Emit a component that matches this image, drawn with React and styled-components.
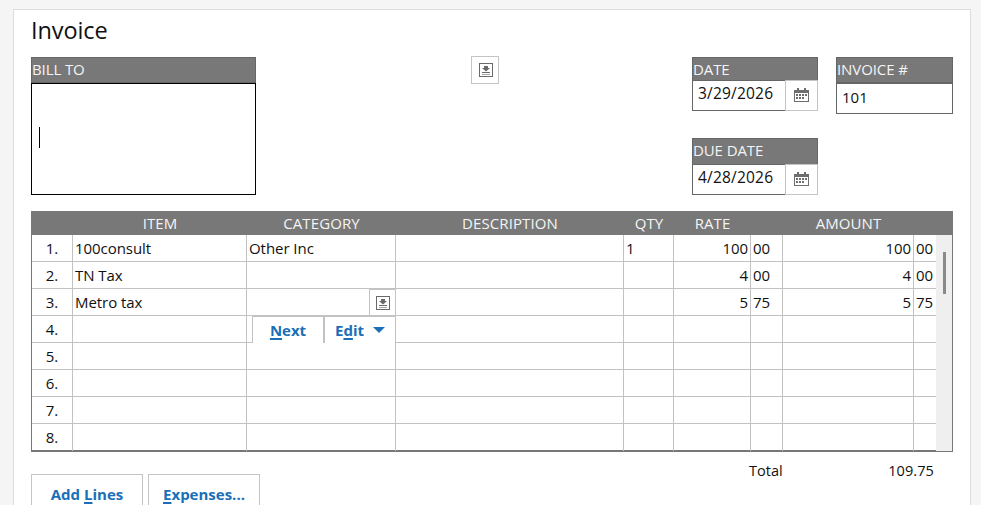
import React from "react";
import styled, { createGlobalStyle } from "styled-components";

const Global = createGlobalStyle`
  html, body { margin: 0; padding: 0; height: 505px; overflow: hidden; background: #f5f5f5; }
  body { font-family: "Open Sans", "Noto Sans", "Liberation Sans", sans-serif; color: #111; }
`;
const FONT_STACK = `"Open Sans", "Noto Sans", "Liberation Sans", sans-serif`;

const Panel = styled.main`
  box-sizing: border-box;
  margin: 9px 0 0 13px;
  width: 958px;
  height: 496px;
  overflow: hidden;
  background: #fff;
  border: 1px solid #dcdcdc;
  border-bottom: 0;
  padding: 0 17px;
`;
const Title = styled.h1`
  margin: 0;
  height: 47px;
  font: 400 23.5px/40px ${FONT_STACK};
  letter-spacing: -0.1px;
  color: #111;
`;
const TopRow = styled.section`
  display: flex;
  align-items: flex-start;
  height: 154px;
`;
const BillTo = styled.div`
  width: 225px;
  margin-right: 215px;
`;
const Label = styled.div`
  box-sizing: border-box;
  height: ${p => p.$h || 26}px;
  background: #787878;
  border: 1px solid #666;
  border-bottom-width: 2px;
  color: #f4f4f4;
  font: 400 15px/23px ${FONT_STACK};
  letter-spacing: -0.1px;
  white-space: nowrap;
`;
const AddressBox = styled.div`
  box-sizing: border-box;
  height: 112px;
  border: 1px solid #000;
  display: flex;
  align-items: center;
  padding: 0 7px 4px;
  margin-top: -1px;
`;
const Caret = styled.span`
  display: block;
  width: 1px;
  height: 21px;
  background: #000;
`;
const IconBtnBox = styled.button`
  box-sizing: border-box;
  padding: 0;
  width: 28px;
  height: 28px;
  background: #fff;
  border: 1px solid #c4c4c4;
  display: flex;
  align-items: center;
  justify-content: center;
`;
const PickBtn = styled(IconBtnBox)`
  margin-top: -1px;
  margin-right: 193px;
  padding-left: 2px;
`;
const DateColumn = styled.div`
  width: 126px;
  margin-right: 18px;
  display: flex;
  flex-direction: column;
  gap: 27px;
`;
const DateField = styled.div`
  display: flex;
  flex-direction: column;
`;
const DateInputRow = styled.div`
  display: flex;
  height: 31px;
  margin-top: -2px;
`;
const DateValue = styled.div`
  box-sizing: border-box;
  width: 93px;
  border: 1px solid #666;
  border-right: 0;
  font: 400 15.5px/25px ${FONT_STACK};
  letter-spacing: 0.2px;
  padding-left: 5px;
  background: #fff;
  white-space: nowrap;
`;
const CalBtn = styled.div`
  box-sizing: border-box;
  width: 33px;
  border: 1px solid #c4c4c4;
  padding-bottom: 2px;
  display: flex;
  align-items: center;
  justify-content: center;
  background: #fff;
`;
const InvoiceField = styled.div`
  width: 117px;
`;
const InvoiceValue = styled.div`
  box-sizing: border-box;
  height: 31px;
  margin-top: -1px;
  border: 1px solid #666;
  font: 400 15px/26px ${FONT_STACK};
  padding-left: 5px;
`;
const Table = styled.section`
  box-sizing: border-box;
  position: relative;
  width: 922px;
  height: 241px;
  border: solid #777;
  border-width: 0 1px 2px 1px;
`;
const HeadRow = styled.div`
  display: grid;
  grid-template-columns: 42px 174px 149px 228px 50px 77px 32px 131px auto;
  height: 24px;
  margin: 0 -1px;
  background: #787878;
`;
const HeadCell = styled.div`
  color: #f4f4f4;
  text-align: center;
  font: 400 15px/25px ${FONT_STACK};
  letter-spacing: 0.1px;
  white-space: nowrap;
`;
const Body = styled.div`
  display: flex;
`;
const Rows = styled.div`
  width: 904px;
`;
const Row = styled.div`
  box-sizing: border-box;
  display: grid;
  grid-template-columns: 41px 174px 149px 228px 50px 77px 32px 131px 22px;
  height: 27px;
  border-bottom: 1px solid #c2c2c2;
  &:last-child { border-bottom: 0; }
`;
const Cell = styled.div`
  box-sizing: border-box;
  border-right: ${p => (p.$last ? 0 : "1px solid #c2c2c2")};
  font: 400 15px/27px ${FONT_STACK};
  letter-spacing: -0.05px;
  padding: 0 2px;
  text-align: ${p => p.$align || "left"};
  white-space: nowrap;
  overflow: hidden;
`;
const Scrollbar = styled.div`
  position: relative;
  width: 16px;
  background: #efefef;
`;
const Thumb = styled.div`
  position: absolute;
  left: 7px;
  top: 17px;
  width: 3px;
  height: 42px;
  background: #8a8a8a;
`;
const CellPick = styled(IconBtnBox)`
  position: absolute;
  left: 337px;
  top: 78px;
  width: 27px;
  height: 27px;
`;
const InlineActions = styled.div`
  position: absolute;
  left: 220px;
  top: 105px;
  display: flex;
  height: 27px;
  background: #fff;
`;
const InlineBtn = styled.button`
  box-sizing: border-box;
  width: ${p => p.$w}px;
  height: 27px;
  padding: 0;
  background: #fff;
  border: 1px solid #c2c2c2;
  border-width: 1px 1px 0 1px;
  color: #1a6fb8;
  font: 700 15px/24px ${FONT_STACK};
  display: flex;
  align-items: center;
  justify-content: center;
  gap: 9px;
  u { text-decoration-thickness: 2px; text-underline-offset: 2px; }
`;
const TotalRow = styled.div`
  display: flex;
  height: 22px;
  margin-top: 8px;
  font: 400 14.5px/22px ${FONT_STACK};
`;
const TotalLabel = styled.span`
  margin-left: 718px;
`;
const TotalValue = styled.span`
  margin-left: auto;
  margin-right: 19px;
  letter-spacing: 0.1px;
`;
const Footer = styled.div`
  display: flex;
  gap: 5px;
  margin-top: -8px;
`;
const ActionBtn = styled.button`
  box-sizing: border-box;
  width: 112px;
  height: 42px;
  padding: 0 0 2px;
  background: #fff;
  border: 1px solid #c4c4c4;
  color: #1a6fb8;
  font: 700 15px/24px ${FONT_STACK};
  u { text-decoration-thickness: 2px; text-underline-offset: 2px; }
`;

const PickIcon = () => (
  <svg width="14" height="14" viewBox="0 0 14 14" fill="none">
    <rect x="0.5" y="0.5" width="13" height="13" stroke="#6a6a6a" />
    <path d="M5 3h4v2h2L7 8.5 3 5h2z" fill="#6a6a6a" />
    <path d="M3 9.5h8" stroke="#6a6a6a" />
    <path d="M3 11.5h8" stroke="#a8a8a8" />
  </svg>
);
const CalIcon = () => (
  <svg width="15" height="14" viewBox="0 0 15 14">
    <path d="M0 2h15v12H0z" fill="#6e6e6e" />
    <path d="M3 0h2v3H3zM10 0h2v3h-2z" fill="#6e6e6e" />
    <path d="M1 5h13v8H1z" fill="#fff" />
    <path d="M2 6h2v2H2zM5 6h2v2H5zM8 6h2v2H8zM11 6h2v2h-2zM2 9h2v2H2zM5 9h2v2H5zM8 9h2v2H8z" fill="#6e6e6e" />
  </svg>
);

const lines = [
  ["100consult", "Other Inc", "", "1", "100", "00", "100", "00"],
  ["TN Tax", "", "", "", "4", "00", "4", "00"],
  ["Metro tax", "", "", "", "5", "75", "5", "75"],
  ...Array(5).fill(["", "", "", "", "", "", "", ""]),
];

export default function App() {
  return (
    <>
      <Global />
      <Panel>
        <Title>Invoice</Title>
        <TopRow>
          <BillTo>
            <Label $h={27}>BILL TO</Label>
            <AddressBox><Caret /></AddressBox>
          </BillTo>
          <PickBtn><PickIcon /></PickBtn>
          <DateColumn>
            <DateField>
              <Label $h={25}>DATE</Label>
              <DateInputRow>
                <DateValue>3/29/2026</DateValue>
                <CalBtn><CalIcon /></CalBtn>
              </DateInputRow>
            </DateField>
            <DateField>
              <Label $h={28}>DUE DATE</Label>
              <DateInputRow>
                <DateValue>4/28/2026</DateValue>
                <CalBtn><CalIcon /></CalBtn>
              </DateInputRow>
            </DateField>
          </DateColumn>
          <InvoiceField>
            <Label $h={27}>INVOICE #</Label>
            <InvoiceValue>101</InvoiceValue>
          </InvoiceField>
        </TopRow>
        <Table>
          <HeadRow>
            <HeadCell />
            <HeadCell>ITEM</HeadCell>
            <HeadCell>CATEGORY</HeadCell>
            <HeadCell>DESCRIPTION</HeadCell>
            <HeadCell>QTY</HeadCell>
            <HeadCell>RATE</HeadCell>
            <HeadCell />
            <HeadCell>AMOUNT</HeadCell>
          </HeadRow>
          <Body>
            <Rows>
              {lines.map((l, i) => (
                <Row key={i}>
                  <Cell $align="center">{i + 1}.</Cell>
                  <Cell>{l[0]}</Cell>
                  <Cell>{l[1]}</Cell>
                  <Cell>{l[2]}</Cell>
                  <Cell>{l[3]}</Cell>
                  <Cell $align="right">{l[4]}</Cell>
                  <Cell>{l[5]}</Cell>
                  <Cell $align="right">{l[6]}</Cell>
                  <Cell $last>{l[7]}</Cell>
                </Row>
              ))}
            </Rows>
            <Scrollbar><Thumb /></Scrollbar>
          </Body>
          <CellPick><PickIcon /></CellPick>
          <InlineActions>
            <InlineBtn $w={72}><span><u>N</u>ext</span></InlineBtn>
            <InlineBtn $w={72}>
              <span>E<u>d</u>it</span>
              <svg width="12" height="6" viewBox="0 0 12 6"><path d="M0 0h12L6 6z" fill="#1a6fb8" /></svg>
            </InlineBtn>
          </InlineActions>
        </Table>
        <TotalRow>
          <TotalLabel>Total</TotalLabel>
          <TotalValue>109.75</TotalValue>
        </TotalRow>
        <Footer>
          <ActionBtn>Add <u>L</u>ines</ActionBtn>
          <ActionBtn><u>E</u>xpenses...</ActionBtn>
        </Footer>
      </Panel>
    </>
  );
}
